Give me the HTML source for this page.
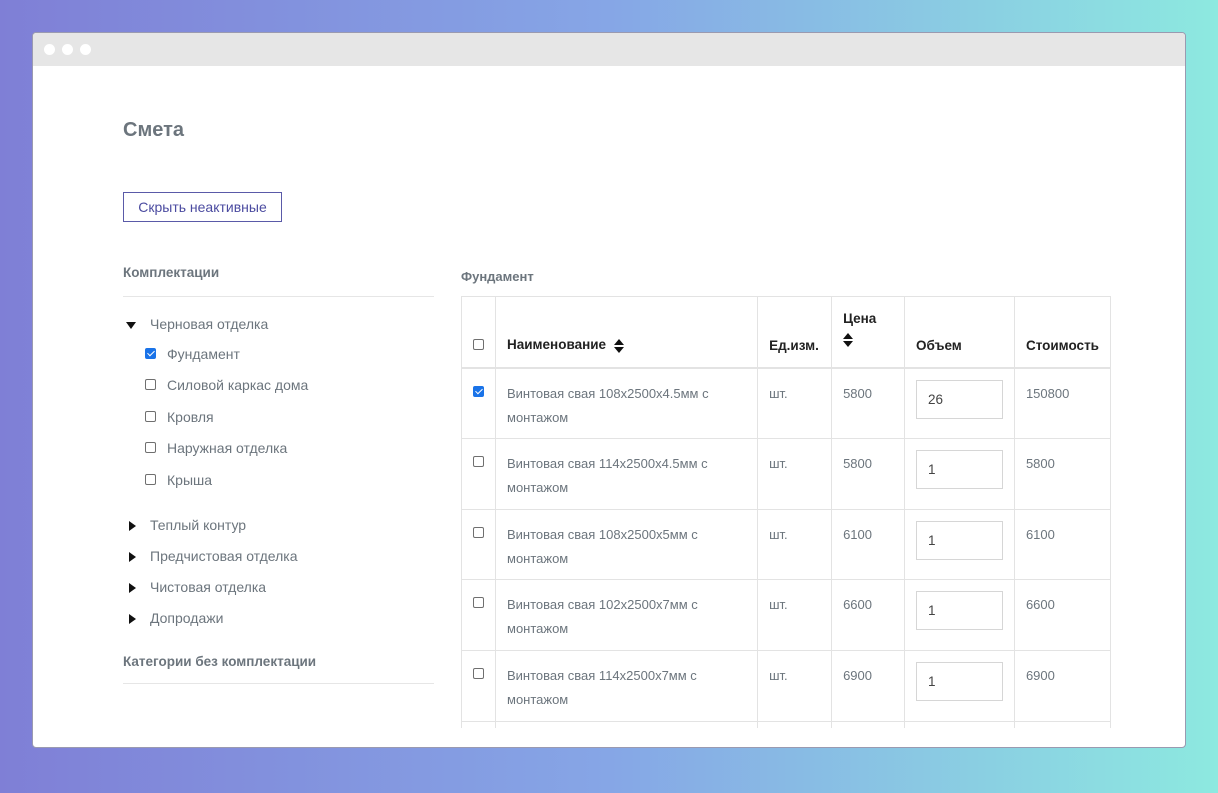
<!DOCTYPE html>
<html><head><meta charset="utf-8"><style>
*{margin:0;padding:0;box-sizing:border-box}
body{width:1218px;height:793px;overflow:hidden;background:linear-gradient(90deg,#7f7fd6 0%,#86a6e6 50%,#8de9e0 100%);font-family:"Liberation Sans","DejaVu Sans",sans-serif;position:relative}
.win{position:absolute;left:32px;top:32px;width:1154px;height:716px;background:#fff;border-radius:4px;overflow:hidden;border:1px solid #9a9ab0}
.bar{height:33px;background:#e6e6e6;position:relative}
.dot{position:absolute;top:11px;width:11px;height:11px;border-radius:50%;background:#fff}
.a{position:absolute;white-space:nowrap}
.g{color:#6c757d}
.cb{position:absolute;width:11px;height:11px;border:1px solid #6f6f6f;border-radius:2px;background:#fff}
.cb.on{background:#1a73e8;border-color:#1a73e8}
.cb.on::after{content:"";position:absolute;left:3px;top:0px;width:3px;height:6px;border:solid #fff;border-width:0 1.6px 1.6px 0;transform:rotate(45deg)}
.tri{position:absolute;width:0;height:0}
.li{font-size:14px;color:#6c757d}
.clip{position:absolute;left:428px;top:263px;width:650px;height:432px;overflow:hidden}
table{position:absolute;left:0;top:0;border-collapse:collapse;font-size:13px;color:#6c757d}
td,th{border:1px solid #e3e3e3;vertical-align:top;text-align:left;padding:0 11px}
th{color:#222;font-size:13.5px;vertical-align:bottom;padding-bottom:14px;border-bottom:2px solid #e3e3e3}
td{padding-top:13px;line-height:24px}
.inp{width:87px;height:39px;border:1px solid #d6d6d6;padding:11px 11px;line-height:16px;font-size:13.5px;color:#444;margin-top:-2px}
.s{display:inline-block;vertical-align:middle;margin-left:4px}
</style></head><body>
<div class="win">
<div class="bar"><div class="dot" style="left:11px"></div><div class="dot" style="left:29px"></div><div class="dot" style="left:47px"></div></div>
<div class="a g" style="left:90px;top:86px;font-size:20px;font-weight:bold;color:#6c757d">Смета</div>
<div class="a" style="left:90px;top:159px;width:159px;height:30px;border:1px solid #5a5aa8;color:#4b4ba0;font-size:14px;text-align:center;line-height:28px">Скрыть неактивные</div>
<div class="a g" style="left:90px;top:232px;font-size:13.5px;font-weight:bold">Комплектации</div>
<div class="a" style="left:90px;top:263px;width:311px;border-top:1px solid #e6e6e6"></div>
<div class="tri" style="left:93px;top:289px;border-left:5px solid transparent;border-right:5px solid transparent;border-top:7px solid #111"></div>
<div class="a li" style="left:117px;top:283px">Черновая отделка</div>
<div class="cb on" style="left:112px;top:315px"></div><div class="a li" style="left:134px;top:313px">Фундамент</div>
<div class="cb" style="left:112px;top:346px"></div><div class="a li" style="left:134px;top:344px">Силовой каркас дома</div>
<div class="cb" style="left:112px;top:378px"></div><div class="a li" style="left:134px;top:376px">Кровля</div>
<div class="cb" style="left:112px;top:409px"></div><div class="a li" style="left:134px;top:407px">Наружная отделка</div>
<div class="cb" style="left:112px;top:441px"></div><div class="a li" style="left:134px;top:439px">Крыша</div>
<div class="tri" style="left:96px;top:488px;border-top:5px solid transparent;border-bottom:5px solid transparent;border-left:7px solid #111"></div><div class="a li" style="left:117px;top:484px">Теплый контур</div>
<div class="tri" style="left:96px;top:519px;border-top:5px solid transparent;border-bottom:5px solid transparent;border-left:7px solid #111"></div><div class="a li" style="left:117px;top:515px">Предчистовая отделка</div>
<div class="tri" style="left:96px;top:550px;border-top:5px solid transparent;border-bottom:5px solid transparent;border-left:7px solid #111"></div><div class="a li" style="left:117px;top:546px">Чистовая отделка</div>
<div class="tri" style="left:96px;top:581px;border-top:5px solid transparent;border-bottom:5px solid transparent;border-left:7px solid #111"></div><div class="a li" style="left:117px;top:577px">Допродажи</div>
<div class="a g" style="left:90px;top:621px;font-size:13.5px;font-weight:bold">Категории без комплектации</div>
<div class="a" style="left:90px;top:650px;width:311px;border-top:1px solid #e6e6e6"></div>
<div class="a g" style="left:428px;top:236px;font-size:13px;font-weight:bold">Фундамент</div>
<div class="clip">
<table>
<tr style="height:71px"><th style="width:33px"><span class="cb" style="position:relative;display:inline-block"></span></th><th style="width:263px">Наименование <svg class="s" width="10" height="14" viewBox="0 0 10 14"><path d="M5 0L10 6H0z M0 8H10L5 14z" fill="#111"/></svg></th><th style="width:74px">Ед.изм.</th><th style="width:73px;padding-bottom:12px;line-height:24px">Цена<br><svg width="10" height="14" viewBox="0 0 10 14"><path d="M5 0L10 6H0z M0 8H10L5 14z" fill="#111"/></svg></th><th style="width:108px">Объем</th><th style="width:96px">Стоимость</th></tr>
<tr style="height:71px"><td><span class="cb on" style="position:relative;display:inline-block;top:-1px"></span></td><td>Винтовая свая 108x2500x4.5мм с<br>монтажом</td><td>шт.</td><td>5800</td><td><div class="inp">26</div></td><td>150800</td></tr>
<tr style="height:71px"><td><span class="cb" style="position:relative;display:inline-block;top:-1px"></span></td><td>Винтовая свая 114x2500x4.5мм с<br>монтажом</td><td>шт.</td><td>5800</td><td><div class="inp">1</div></td><td>5800</td></tr>
<tr style="height:70px"><td><span class="cb" style="position:relative;display:inline-block;top:-1px"></span></td><td>Винтовая свая 108x2500x5мм с<br>монтажом</td><td>шт.</td><td>6100</td><td><div class="inp">1</div></td><td>6100</td></tr>
<tr style="height:71px"><td><span class="cb" style="position:relative;display:inline-block;top:-1px"></span></td><td>Винтовая свая 102x2500x7мм с<br>монтажом</td><td>шт.</td><td>6600</td><td><div class="inp">1</div></td><td>6600</td></tr>
<tr style="height:71px"><td><span class="cb" style="position:relative;display:inline-block;top:-1px"></span></td><td>Винтовая свая 114x2500x7мм с<br>монтажом</td><td>шт.</td><td>6900</td><td><div class="inp">1</div></td><td>6900</td></tr>
<tr style="height:71px"><td></td><td></td><td></td><td></td><td></td><td></td></tr>
</table>
</div>
</div>
</body></html>
